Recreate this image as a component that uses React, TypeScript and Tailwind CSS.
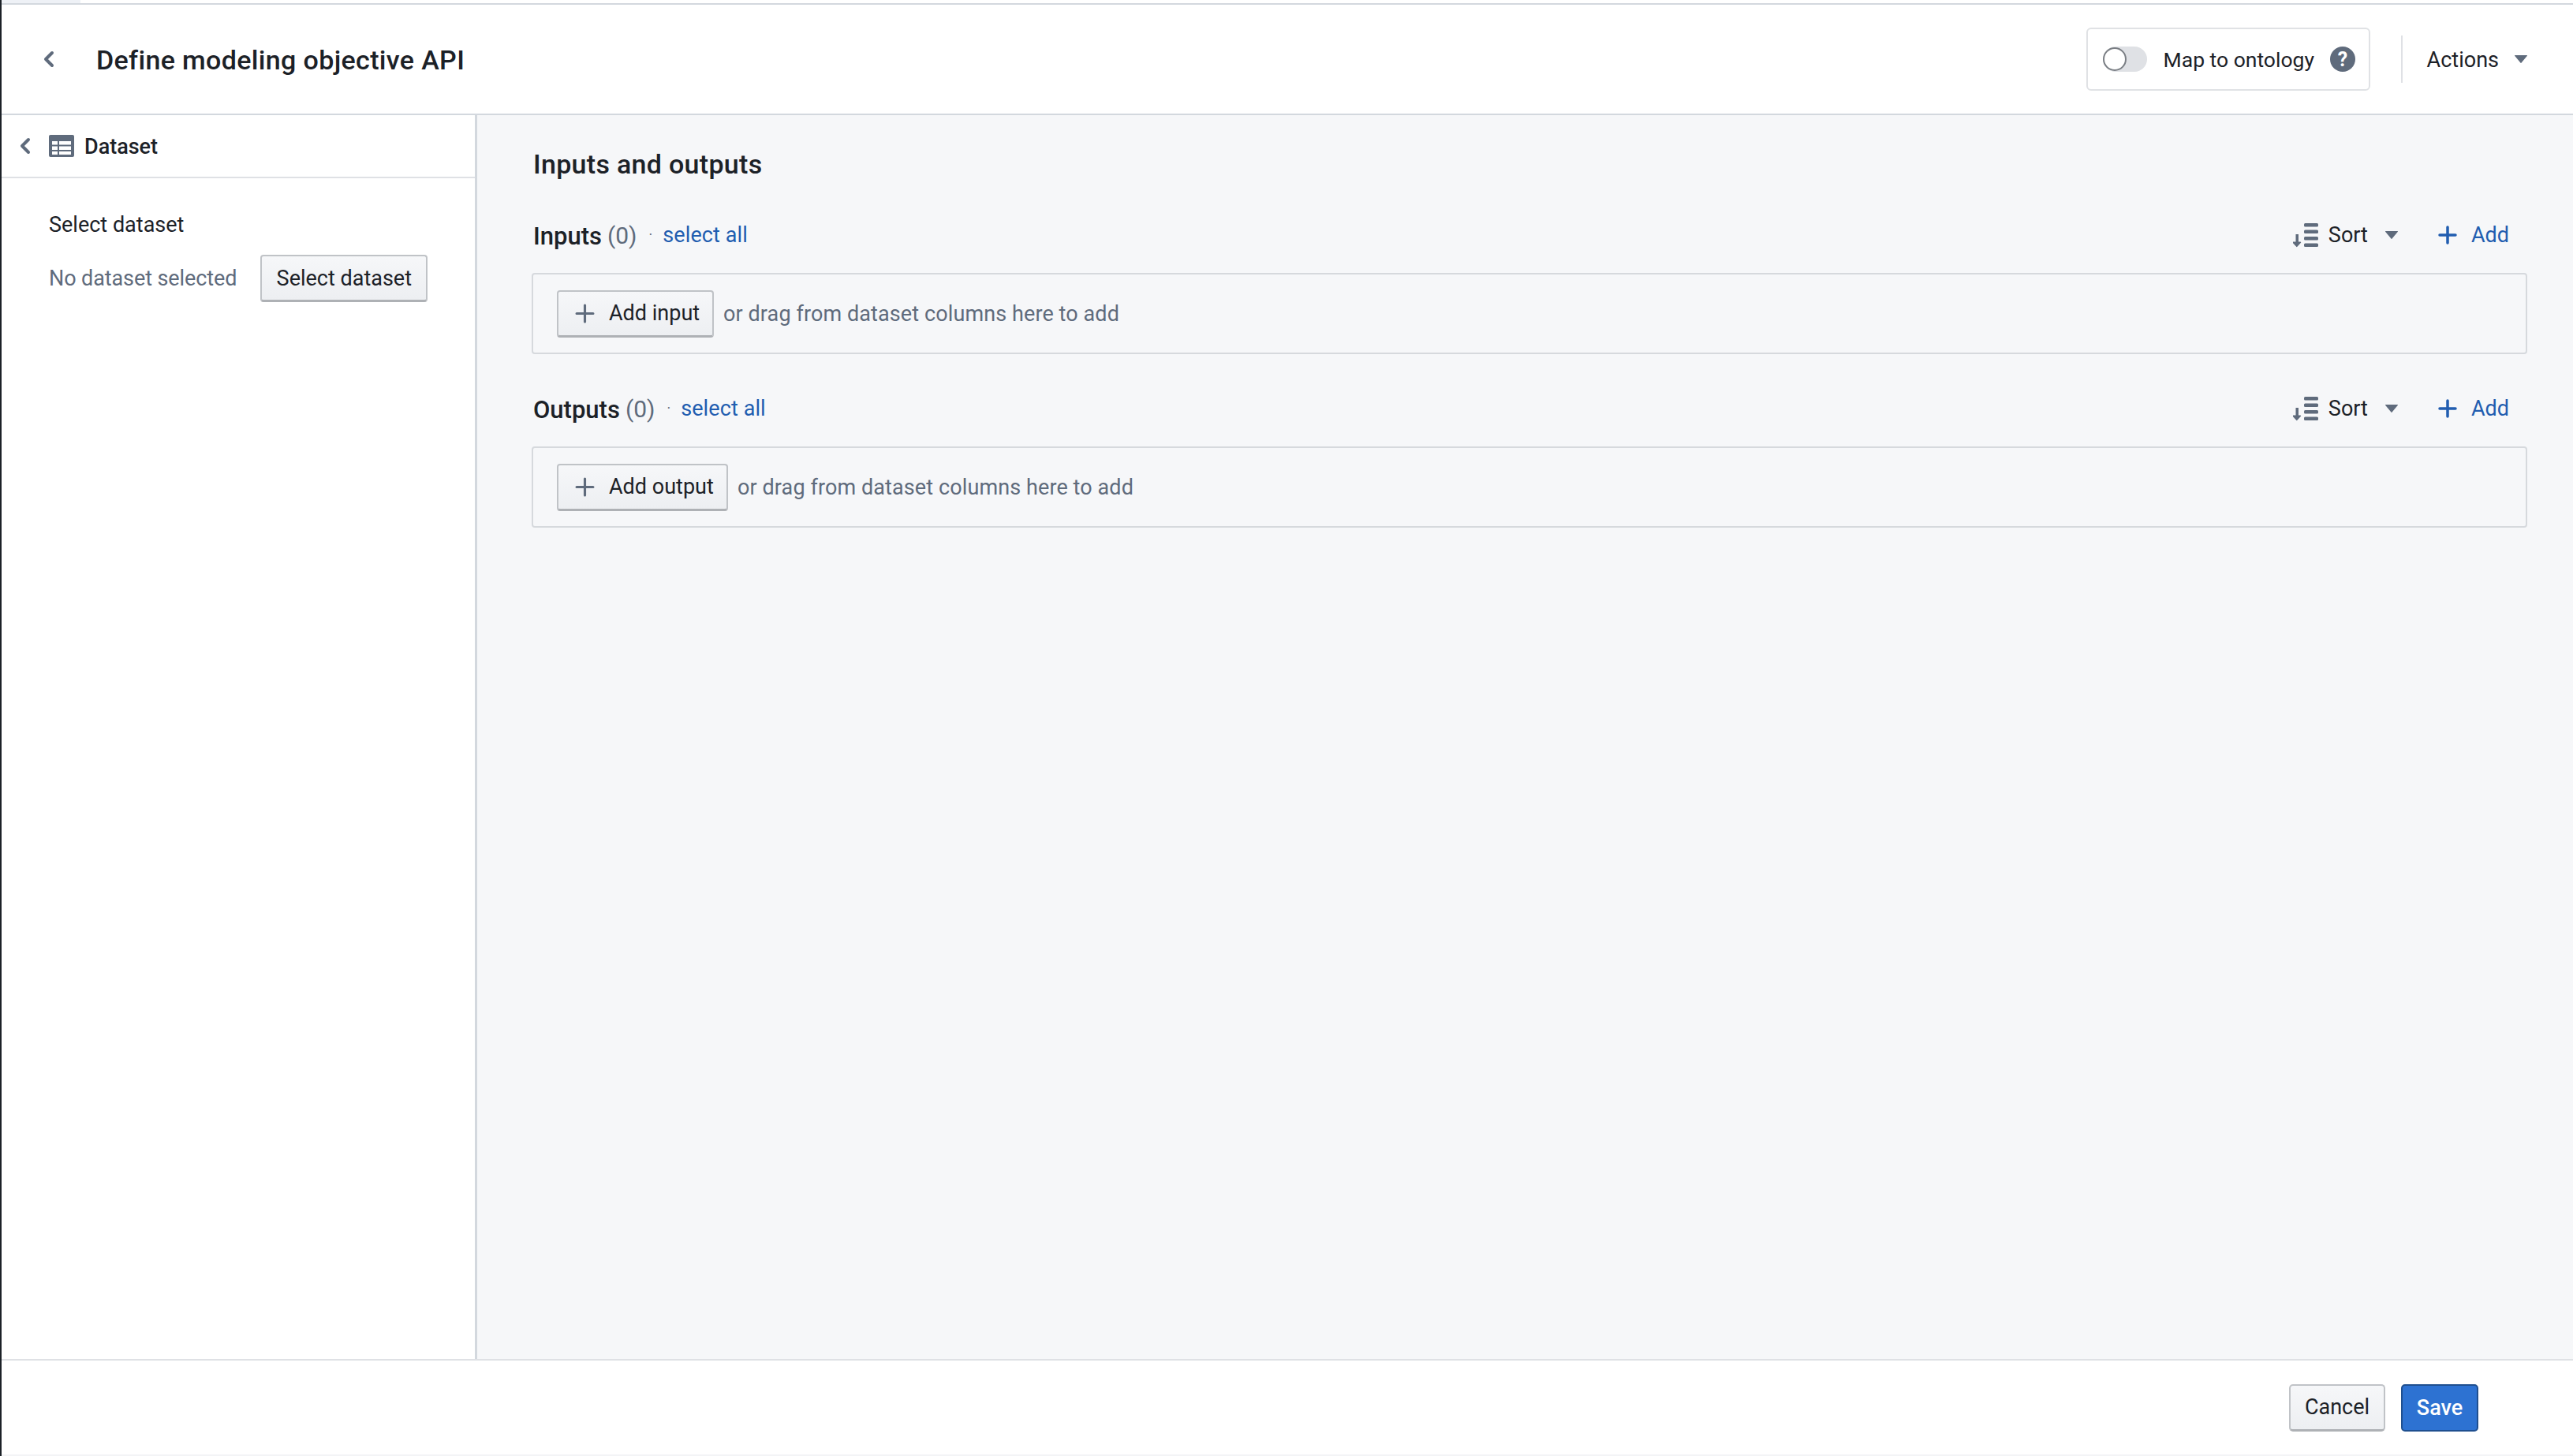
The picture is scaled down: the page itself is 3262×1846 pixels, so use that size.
import { ChevronLeft } from "lucide-react";

function Caret({ className }: { className: string }) {
    return (
        <svg viewBox="0 0 16 10" className={className} fill="currentColor">
            <path d="M0.5 0h15a0.5 0.5 0 0 1 0.4 0.8l-7.5 9a0.5 0.5 0 0 1-0.8 0l-7.5-9a0.5 0.5 0 0 1 0.4-0.8z" />
        </svg>
    );
}

function PlusIcon({ className, weight }: { className: string; weight: number }) {
    return (
        <svg viewBox="0 0 24 24" className={className} stroke="currentColor" strokeWidth={weight} strokeLinecap="round">
            <path d="M12 2v20M2 12h20" />
        </svg>
    );
}

function SortIcon() {
    return (
        <svg viewBox="0 0 32 32" className="w-8 h-8 text-[#5f6b7c]" fill="currentColor">
            <rect x="14" y="1" width="18" height="4.5" rx="1.5" />
            <rect x="14" y="9.5" width="18" height="4.5" rx="1.5" />
            <rect x="14" y="18" width="18" height="4.5" rx="1.5" />
            <rect x="14" y="26.5" width="18" height="4.5" rx="1.5" />
            <path d="M3.5 15h3.5v9.5h2.4a0.8 0.8 0 0 1 0.6 1.3l-4.6 5a0.8 0.8 0 0 1-1.2 0l-4.6-5a0.8 0.8 0 0 1 0.6-1.3h3.3z" />
        </svg>
    );
}

function TableIcon() {
    return (
        <svg viewBox="0 0 32 28" className="w-8 h-7 text-[#5f6b7c]">
            <rect width="32" height="28" rx="2" fill="currentColor" />
            <g fill="#ffffff">
                <rect x="4" y="8" width="7" height="4.5" />
                <rect x="13" y="8" width="15" height="4.5" />
                <rect x="4" y="14.5" width="7" height="4.5" />
                <rect x="13" y="14.5" width="15" height="4.5" />
                <rect x="4" y="21" width="7" height="4" />
                <rect x="13" y="21" width="15" height="4" />
            </g>
        </svg>
    );
}

function HelpIcon() {
    return (
        <div className="w-8 h-8 rounded-full bg-[#5f6b7c] flex items-center justify-center text-white text-[25px] font-bold leading-none">?</div>
    );
}

function SortAndAdd() {
    return (
        <div className="flex items-center ml-auto">
            <SortIcon />
            <span className="ml-[13px] pt-[1px] text-[#1c2127]">Sort</span>
            <Caret className="ml-[22px] w-4 h-[10px] text-[#5f6b7c]" />
            <PlusIcon className="ml-[51px] w-6 h-6 text-[#215db0]" weight={3.5} />
            <span className="ml-[18px] mr-[23px] pt-[1px] text-[#215db0]">Add</span>
        </div>
    );
}

function Section({ title, button, buttonWidth }: { title: string; button: string; buttonWidth: string }) {
    return (
        <div>
            <div className="flex items-center h-[40px] pl-[2px]">
                <span className="text-[31px] pt-[2px] font-medium text-[#1c2127]">{title}</span>
                <span className="ml-[7px] pt-[2px] text-[30px] text-[#5f6b7c]">(0)</span>
                <span className="ml-[15px] text-[#5f6b7c] text-[18px]">·</span>
                <span className="ml-[13px] pt-[1px] tracking-[0.1px] text-[#215db0]">select all</span>
                <SortAndAdd />
            </div>
            <div className="mt-[28px] h-[103px] border-2 border-[#d6d9dd] rounded-[4px] flex items-center pl-[30px]">
                <button className={`${buttonWidth} h-[60px] flex items-center pl-[21px] border-2 border-b-[3px] border-[#c0c3c7] border-b-[#aeb1b5] rounded-[4px] bg-linear-to-b from-[#f6f7f9] to-[#edeff2] text-[#1c2127]`}>
                    <PlusIcon className="w-[25px] h-[25px] text-[#5f6b7c]" weight={3} />
                    <span className="ml-[18px] pt-[1px] whitespace-nowrap">{button}</span>
                </button>
                <span className="ml-[12px] pt-[1px] tracking-[0.1px] text-[#5f6b7c]">or drag from dataset columns here to add</span>
            </div>
        </div>
    );
}

export default function App() {
    return (
        <div className="h-[1846px] w-full flex flex-col bg-white border-l-2 border-[#1c2127] font-['Roboto',sans-serif] text-[27px] leading-none overflow-hidden">
            <div className="h-[6px] shrink-0 border-b-[2px] border-[#d3d8de]">
                <div className="w-[100px] h-[4px] bg-[#eef1f6]" />
            </div>
            <header className="h-[140px] shrink-0 flex items-center border-b-2 border-[#d3d8de] pl-[44px] pr-[58px]">
                <ChevronLeft className="w-8 h-8 text-[#5f6b7c]" strokeWidth={3} />
                <h1 className="ml-[44px] pt-[2px] text-[34px] tracking-[0.35px] font-medium text-[#1c2127]">Define modeling objective API</h1>
                <div className="ml-auto w-[360px] h-[80px] border-2 border-[#e0e2e5] rounded-[6px] flex items-center pl-[19px]">
                    <div className="relative w-[56px] h-[32px] rounded-full bg-[#dfe1e5]">
                        <div className="absolute left-0 top-[1px] w-[30px] h-[30px] rounded-full bg-white border-2 border-[#7a7e84]" />
                    </div>
                    <span className="ml-[21px] pt-[2px] text-[26.5px] text-[#1c2127] whitespace-nowrap">Map to ontology</span>
                    <div className="ml-[20px]"><HelpIcon /></div>
                </div>
                <div className="ml-[39px] w-[2px] h-[60px] bg-[#dfe1e5]" />
                <span className="ml-[31px] pt-[2px] text-[#1c2127]">Actions</span>
                <Caret className="ml-[20px] w-4 h-[10px] text-[#5f6b7c]" />
            </header>
            <div className="flex-1 flex min-h-0">
                <aside className="w-[603px] shrink-0 border-r-[3px] border-[#d3d8de]">
                    <div className="h-[80px] flex items-center border-b-2 border-[#dfe1e5] pl-[14px]">
                        <ChevronLeft className="w-8 h-8 text-[#5f6b7c]" strokeWidth={3} />
                        <div className="ml-[14px]"><TableIcon /></div>
                        <span className="ml-[13px] pt-[3px] font-medium text-[#1c2127]">Dataset</span>
                    </div>
                    <div className="pl-[60px] pt-[46px]">
                        <div className="text-[#1c2127]">Select dataset</div>
                        <div className="mt-[24px] flex items-center">
                            <span className="text-[#5f6b7c] pt-[1px] tracking-[-0.1px] whitespace-nowrap">No dataset selected</span>
                            <button className="ml-[30px] w-[212px] h-[60px] pt-[1px] border-2 border-b-[3px] border-[#c0c3c7] border-b-[#aeb1b5] rounded-[4px] bg-linear-to-b from-[#f6f7f9] to-[#edeff2] text-[#1c2127] whitespace-nowrap">Select dataset</button>
                        </div>
                    </div>
                </aside>
                <main className="flex-1 bg-[#f6f7f9] pl-[69px] pr-[58px] pt-[45px]">
                    <h2 className="pl-[2px] text-[34px] tracking-[0.3px] font-medium text-[#1c2127]">Inputs and outputs</h2>
                    <div className="mt-[53px] flex flex-col gap-[49px]">
                        <Section title="Inputs" button="Add input" buttonWidth="w-[199px]" />
                        <Section title="Outputs" button="Add output" buttonWidth="w-[217px]" />
                    </div>
                </main>
            </div>
            <footer className="h-[123px] shrink-0 border-t-2 border-b-2 border-t-[#dfe1e5] border-b-[#f3f4f6] flex items-center justify-end gap-[20px] pr-[120px]">
                <button className="w-[122px] h-[60px] pt-[1px] border-2 border-b-[3px] border-[#c0c3c7] border-b-[#aeb1b5] rounded-[5px] bg-linear-to-b from-[#f6f7f9] to-[#edeff2] text-[#1c2127]">Cancel</button>
                <button className="w-[98px] h-[60px] pt-[1px] border-2 border-[#1f4f8f] rounded-[5px] bg-[#2d72d2] text-white font-medium">Save</button>
            </footer>
        </div>
    );
}
